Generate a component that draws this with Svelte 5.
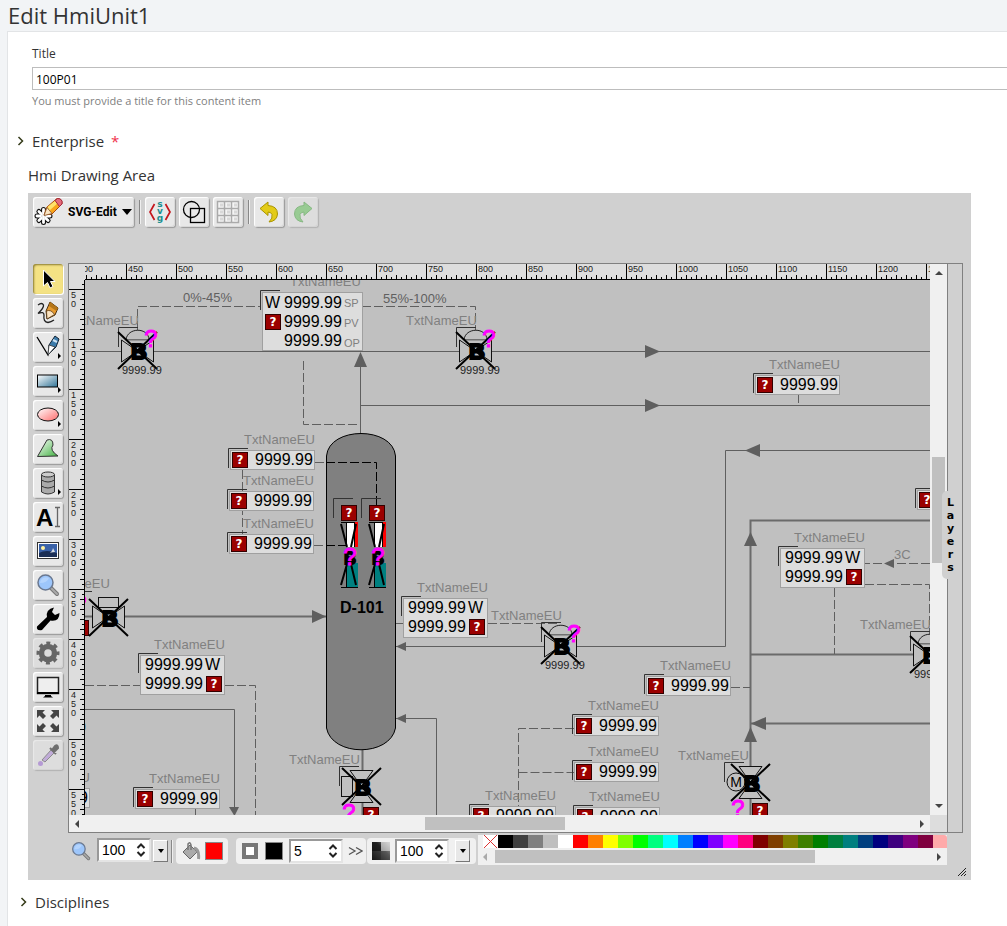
<script>
  const name = 'TxtNameEU';
  const reading = '9999.99';

  const hTicks = Array.from({ length: 60 }, (_, i) => ({ x: i * 50 - 9, label: String(400 + i * 50) }));
  const vTicks = Array.from({ length: 12 }, (_, i) => ({ y: i * 50 - 40, label: String(i * 50) }));
  const subs = [1, 2, 3, 4, 5, 6, 7, 8, 9];
  const petals = [0, 45, 90, 135, 180, 225, 270, 315];

  const singles = [
    [230, 450], [229, 491], [229, 534], [135, 789], [755, 375], [646, 676],
    [574, 716], [574, 762], [471, 806], [575, 807], [917, 490], [5, 788]
  ];
  const doubles = [[140, 655], [403, 598], [780, 548]];
  const valves = [[137, 351], [475, 351], [560, 646], [929, 655]];
  const gauges = [[341, 505], [369, 505]];

  const pipes = [
    'M85 351.5H930', 'M360.5 434V354', 'M360 405.5H930', 'M930 450.5H725.5V646.5H396',
    'M85 709.5H234.5V815', 'M396 718.5H436.5V815'
  ];
  const mains = [
    'M750.5 783V520.5H930', 'M750 654.5H930', 'M750 723.5H930', 'M85 616.5H326',
    'M362.5 750V815', 'M750.5 783V815'
  ];
  const signals = [
    'M137.5 330V306.5H260', 'M362 306.5H475.5V330', 'M303.5 361V424.5H360', 'M798.5 394V405',
    'M242.5 470V534', 'M315 462.5H326', 'M314 545.5H326', 'M85 685.5H140', 'M225 685.5H255.5V815',
    'M195.5 809V815', 'M574 728.5H518.5V806', 'M518.5 772.5H574', 'M396 623.5H403', 'M488 623.5H560',
    'M731 687.5H750', 'M930 563.5H865', 'M865 584.5H929.5V640', 'M834.5 588V654'
  ];
  const arrows = [
    '354,367 367,367 360.5,352', '645,345 645,358 660,351.5', '645,399 645,412 660,405.5',
    '760,444 760,457 745,450.5', '744,546 757,546 750.5,532', '766,717 766,730 751,723.5',
    '744,742 757,742 750.5,727', '312,610 312,623 326,616.5', '406,642 406,651 396,646.5',
    '406,714 406,723 396,718.5', '229,807 239,807 234.5,816', '894,559 894,568 884,563.5'
  ];
  const swatches = [
    '#000000', '#3f3f3f', '#7f7f7f', '#bfbfbf', '#ffffff', '#ff0000', '#ff7f00', '#ffff00', '#7fff00',
    '#00ff00', '#00ff7f', '#00ffff', '#007fff', '#0000ff', '#7f00ff', '#ff00ff', '#ff007f', '#7f0000',
    '#7f3f00', '#7f7f00', '#3f7f00', '#007f00', '#007f3f', '#007f7f', '#003f7f', '#00007f', '#3f007f',
    '#7f007f', '#7f003f', '#ffaaaa'
  ];

  const tools = [
    'Select', 'Pencil', 'Line', 'Rectangle', 'Ellipse', 'Path', 'Shape library', 'Text', 'Image',
    'Zoom', 'Wrench', 'Settings', 'Display', 'Full size', 'Eye dropper'
  ];
  const flyouts = ['Line', 'Rectangle', 'Ellipse', 'Shape library'];
  const faded = ['Settings', 'Eye dropper'];
  let active = $state('Select');
  let title = $state('100P01');
  let zoom = $state('100');
  let stroke = $state('5');
  let opacity = $state('100');
</script>

{#snippet query(x, y)}
  <rect x={x + 0.5} y={y + 0.5} width="15" height="15" fill="#9b0000" stroke="#300" />
  <text class="q" x={x + 8} y={y + 12}>?</text>
{/snippet}

{#snippet corner(x, y)}
  <path d="M{x + 0.5} {y + 20}V{y + 0.5}H{x + 20}" fill="none" stroke="#333" />
{/snippet}

{#snippet cross(x, y)}
  <text class="fail" x={x + 2} y={y + 8}>B</text>
  <path d="M{x - 19} {y - 19}L{x + 20} {y + 18}M{x + 20} {y - 19}L{x - 19} {y + 18}" stroke="#000" stroke-width="2" />
{/snippet}

{#snippet magnifier()}
  <path d="M15 15L21 21" stroke="#777" stroke-width="4" stroke-linecap="round" />
  <path d="M15 15L21 21" stroke="#aaa" stroke-width="2" stroke-linecap="round" />
  <circle cx="9.500" cy="9.500" r="7.500" fill="#9dc6fb" stroke="#6a7890" stroke-width="1.500" />
  <path d="M4 10A6 6 0 0 1 13 5Q11 10 4 10Z" fill="#b4d4fd" />
{/snippet}

{#snippet spinner()}
  <svg class="spin" width="10" height="16" viewBox="0 0 10 16" aria-hidden="true">
    <path d="M1.500 6L5 2.500L8.500 6M1.500 10L5 13.500L8.500 10" fill="none" stroke="#222" stroke-width="2" />
  </svg>
{/snippet}

<h1>Edit HmiUnit1</h1>

<main>
  <div class="field">
    <label for="title">Title</label>
    <input id="title" type="text" bind:value={title} />
    <p>You must provide a title for this content item</p>
  </div>

  <h2><button class="fold"><svg width="8" height="10" viewBox="0 0 8 10" aria-hidden="true"><path d="M1.500 1L5.500 5L1.500 9" /></svg>Enterprise <em>*</em></button></h2>

  <h2 class="area">Hmi Drawing Area</h2>

  <section class="editor" aria-label="SVG-Edit">
    <div class="topbar">
      <button class="btn menu">
        <svg width="31" height="30" viewBox="0 0 31 30" aria-hidden="true">
          <g transform="translate(10.500 19)" stroke-linecap="round">
            {#each petals as a}<path transform="rotate({a})" d="M0 0V-6.500" stroke="#111" stroke-width="5" />{/each}
            {#each petals as a}<path transform="rotate({a})" d="M0 -3V-6.500" stroke="#fff" stroke-width="2.800" />{/each}
            {#each petals as a}<path transform="rotate({a})" d="M0 0V-4" stroke="#fff" stroke-width="1.200" />{/each}
          </g>
          <path d="M11 18L14 10L24 1.500Q29.500 1.500 29 7L19 17Z" fill="#f9a51b" stroke="#a8480f" />
          <path d="M14.500 10L23 3L25.500 5.500L16.500 13.500Z" fill="#ffe36b" />
          <path d="M22 3.500L24.500 1.500Q30 1.500 29 7L26.500 9.500Z" fill="#e66c7b" stroke="#a5283c" />
          <path d="M11 18.500L14 10.500L19 16.500Z" fill="#fbe5c3" stroke="#7b4a20" stroke-width=".7" />
        </svg>
        <span>SVG-Edit</span>
        <svg width="10" height="6" viewBox="0 0 10 6" aria-hidden="true"><path d="M0 0H10L5 6Z" /></svg>
      </button>
      <i class="rule"></i>
      <button class="btn" aria-label="Edit source">
        <svg width="24" height="24" viewBox="0 0 24 24" aria-hidden="true">
          <path d="M6.500 4L2 12L6.500 20M17.500 4L22 12L17.500 20" fill="none" stroke="#c4161c" stroke-width="1.700" />
          <g class="svgmark"><text x="12" y="7">s</text><text x="12" y="14">v</text><text x="12" y="21">g</text></g>
        </svg>
      </button>
      <button class="btn" aria-label="Wireframe mode">
        <svg width="24" height="24" viewBox="0 0 24 24" fill="none" stroke="#000" stroke-width="1.300" aria-hidden="true"><circle cx="9.500" cy="9.500" r="8" /><rect x="8.500" y="8.500" width="14" height="14" /></svg>
      </button>
      <button class="btn" aria-label="Show grid">
        <svg width="24" height="24" viewBox="0 0 24 24" aria-hidden="true">
          <path d="M1.500 1.500H22.500V22.500H1.500Z" fill="#f4f4f4" />
          <path d="M4 5H7M11 5H14M18 5H21M4 12H7M11 12H14M18 12H21M4 19H7M11 19H14M18 19H21" stroke="#d8d8d8" stroke-width="3" />
          <path d="M1.500 1.500H22.500V22.500H1.500ZM8.500 1V23M15.500 1V23M1 8.500H23M1 15.500H23" fill="none" stroke="#aaa" stroke-width="1.500" />
        </svg>
      </button>
      <i class="rule"></i>
      <button class="btn" aria-label="Undo">
        <svg width="24" height="24" viewBox="0 0 24 24" aria-hidden="true"><path d="M3 8.500L11 2V5.500Q20.500 6 20.500 14Q20 21 12 22Q16 18 15 14.500Q14 12 11 12V15.500Z" fill="#e3cb17" stroke="#a99400" /></svg>
      </button>
      <button class="btn faded" aria-label="Redo">
        <svg width="24" height="24" viewBox="0 0 24 24" aria-hidden="true"><path d="M21 8.500L13 2V5.500Q3.500 6 3.500 14Q4 21 12 22Q8 18 9 14.500Q10 12 13 12V15.500Z" fill="#6cc862" stroke="#4ba544" /></svg>
      </button>
    </div>

    <div class="middle">
      <div class="tools" role="toolbar" aria-label="Drawing tools">
        {#each tools as tool}
          <button class="btn" class:active={active === tool} class:faded={faded.includes(tool)} aria-label={tool} onclick={() => (active = tool)}>
            <svg width="24" height="24" viewBox="0 0 24 24" aria-hidden="true">
              {#if tool === 'Select'}
                <path d="M7.500 3V19L11.500 15.500L14 21L17 19.500L14.500 14.500H19Z" stroke="#fff" />
              {:else if tool === 'Pencil'}
                <path d="M2 4Q6 1 7.500 4Q8 7 2 12.500Q8 10 8 14Q7 21 12 21.500Q15 21 18 19" fill="none" stroke="#222" stroke-width="1.300" />
                <path d="M10 10L14 1L22 7L19 14L11 18Z" fill="#e79a2e" stroke="#4a2d0c" /><path d="M10.500 10Q15 8 18.500 13.500L11 18Z" fill="#fbe3c0" stroke="#4a2d0c" stroke-width=".7" /><path d="M14 1L22 7L20.500 10L13 5Z" fill="#b57618" />
              {:else if tool === 'Line'}
                <path d="M1 2L12 20L15 11" fill="none" stroke="#000" stroke-width="1.300" />
                <path d="M12 20L13 10L19 1L23 4L20 12Z" fill="#3c7cac" stroke="#123" /><path d="M12 20L13 10L19 12Z" fill="#fff" stroke="#333" stroke-width=".8" /><path d="M17 5L21 7" stroke="#cfe4f5" stroke-width="2" />
              {:else if tool === 'Rectangle'}
                <rect x="1.500" y="6" width="20" height="12" fill="url(#blue)" stroke="#000" />
              {:else if tool === 'Ellipse'}
                <ellipse cx="12" cy="11.500" rx="10.500" ry="6.500" fill="url(#pink)" stroke="#111" />
              {:else if tool === 'Path'}
                <path d="M1.500 19.500L11 3Q17 1 17 8Q13 13 22 19Z" fill="url(#green)" stroke="#333" />
              {:else if tool === 'Shape library'}
                <g fill="#aaa" stroke="#333"><path d="M5.500 3.500V21Q12 25 18.500 21V3.500" /><ellipse cx="12" cy="3.500" rx="6.500" ry="2.500" fill="#ccc" /><path d="M5.500 9Q12 13 18.500 9M5.500 15Q12 19 18.500 15" fill="none" /></g>
              {:else if tool === 'Text'}
                <text class="glyph" x="0" y="21">A</text><path d="M19 2.500H24M19 21.500H24M21.500 2.500V21.500" fill="none" stroke="#666" stroke-width="1.300" />
              {:else if tool === 'Image'}
                <rect x="1.500" y="3.500" width="21" height="16" fill="#fff" stroke="#333" /><rect x="3" y="5" width="18" height="13" fill="#3a62a8" /><path d="M3 14Q10 10 21 14V18H3Z" fill="#1c2f55" /><circle cx="7" cy="9" r="2" fill="#fff1a0" /><path d="M12 14Q16 14 17 9L19 13Z" fill="#d9dde5" />
              {:else if tool === 'Zoom'}
                {@render magnifier()}
              {:else if tool === 'Wrench'}
                <path d="M1 19.500L11 10Q9.500 2.500 18 0.500L16 5L19 8L23.500 6Q23.500 15 14.500 13.500L6 23Q0 24 1 19.500Z" />
              {:else if tool === 'Settings'}
                <circle cx="12" cy="12" r="6.500" fill="none" stroke="#111" stroke-width="5.500" /><circle cx="12" cy="12" r="10" fill="none" stroke="#111" stroke-width="3" stroke-dasharray="4 3.850" stroke-dashoffset="2" />
              {:else if tool === 'Display'}
                <rect x="1.500" y="2.500" width="21" height="16" fill="#eee" stroke="#222" stroke-width="1.500" /><path d="M1 17H23V19H1Z" /><path d="M9 20H15V21L17 22.500H7L9 21Z" />
              {:else if tool === 'Full size'}
                <path d="M1 1H9L6.500 3.500L10 7L7 10L3.500 6.500L1 9ZM23 1V9L20.500 6.500L17 10L14 7L17.500 3.500L15 1ZM1 23V15L3.500 17.500L7 14L10 17L6.500 20.500L9 23ZM23 23H15L17.500 20.500L14 17L17 14L20.500 17.500L23 15Z" fill="#444" />
              {:else}
                <path d="M6 17L15 7L18 10L9 19Z" fill="#b38ee0" stroke="#555" /><path d="M14 5L20 11M16 7L19 3Q22 1 22 5L18 9Z" fill="#222" stroke="#222" stroke-width="2" /><circle cx="4.500" cy="20.500" r="2.500" fill="#a06fd8" />
              {/if}
            </svg>
            {#if flyouts.includes(tool)}<b class="fly"></b>{/if}
          </button>
        {/each}
      </div>

      <div class="work">
        <div class="origin"></div>
        <svg class="ruler" width="100%" height="16" aria-hidden="true">
          <path d="M0 15.500H3000" stroke="#000" />
          {#each hTicks as t}
            <path d="M{t.x + 0.5} 0V16" stroke="#000" />
            {#each subs as s}<path d="M{t.x + s * 5 + 0.5} {s % 2 ? 13 : 11}V16" stroke="#000" />{/each}
            <text x={t.x + 2} y="8">{t.label}</text>
          {/each}
        </svg>
        <div class="vscroll"><b class="up"></b><span></span><b class="down"></b></div>
        <div class="side"></div>
        <svg class="ruler left" width="16" height="535" aria-hidden="true">
          <path d="M15.500 0V535" stroke="#000" />
          {#each vTicks as t}
            <path d="M0 {t.y - 0.5}H16" stroke="#000" />
            {#each subs as s}<path d="M{s % 2 ? 13 : 11} {t.y + s * 5 - 0.5}H16" stroke="#000" />{/each}
            {#each t.label as d, i}<text x="2" y={t.y + 8 + i * 9}>{d}</text>{/each}
          {/each}
        </svg>

        <svg class="canvas" width="100%" height="535" role="img" aria-label="Process drawing">
          <defs>
            <linearGradient id="blue" x2="1" y2="1"><stop stop-color="#fff" /><stop offset="1" stop-color="#2f7396" /></linearGradient>
            <linearGradient id="pink" x2="1" y2="1"><stop stop-color="#fff" /><stop offset="1" stop-color="#ff6a6a" /></linearGradient>
            <linearGradient id="green" x2="1" y2="1"><stop stop-color="#fff" /><stop offset="1" stop-color="#3eb03e" /></linearGradient>
          </defs>
          <g transform="translate(-85 -280)">
            {#each pipes as d}<path {d} fill="none" stroke="#5f5f5f" />{/each}
            {#each mains as d}<path {d} fill="none" stroke="#6b6b6b" stroke-width="2" />{/each}
            {#each signals as d}<path {d} fill="none" stroke="#5f5f5f" stroke-dasharray="9 3" />{/each}
            {#each arrows as points}<polygon {points} fill="#5f5f5f" />{/each}

            <path d="M326.500 456C329 426 393 426 395.500 456V728C390 757 332 757 326.500 728Z" fill="#808080" stroke="#000" />
            <path d="M326 462.500H376.500V505M326 545.500H346" fill="none" stroke="#000" stroke-dasharray="9 3" />
            <text class="tag" x="340" y="613">D-101</text>

            {#each gauges as [x, y]}
              {@render corner(x - 8, y - 7)}
              {@render query(x, y)}
              <rect x={x + 5} y={y + 17} width="8" height="25" fill="#fff" />
              <rect x={x + 14} y={y + 17} width="3" height="25" fill="#f00" />
              <rect x={x + 6} y={y + 58} width="11" height="24" fill="#008080" />
              <path d="M{x} {y + 17.5}H{x + 13}M{x} {y + 82.5}H{x + 17}M{x + 5.5} {y + 17}V{y + 42}M{x + 5.5} {y + 58}V{y + 82}M{x + 13.5} {y + 17}V{y + 42}" stroke="#000" />
              <path d="M{x} {y + 19}L{x + 6} {y + 42}M{x + 15} {y + 19}L{x + 10} {y + 42}M{x + 6} {y + 59}L{x} {y + 80}M{x + 10} {y + 59}L{x + 15} {y + 80}" stroke="#000" stroke-width="2" />
              <text class="fail small" x={x + 9} y={y + 59}>B</text>
              <text class="ask" x={x + 9} y={y + 60}>?</text>
            {/each}

            <text class="pct" x="183" y="302">0%-45%</text>
            <text class="pct" x="383" y="303">55%-100%</text>
            <text class="name" x="894" y="559">3C</text>
            <text class="val" x="28" y="733">{reading}</text>

            {#each singles as [x, y]}
              {@render corner(x - 2, y - 2)}
              <rect x={x + 0.5} y={y + 0.5} width="84" height="19" fill="#ddd" stroke="#a0a0a0" />
              {@render query(x + 2, y + 2)}
              <text class="val" x={x + 25} y={y + 15}>{reading}</text>
              <text class="name" x={x + 14} y={y - 6}>{name}</text>
            {/each}

            {#each doubles as [x, y]}
              {@render corner(x - 2, y - 2)}
              <rect x={x + 0.5} y={y + 0.5} width="84" height="39" fill="#ddd" stroke="#a0a0a0" />
              <text class="val" x={x + 5} y={y + 15}>{reading}</text>
              <text class="val" x={x + 65} y={y + 15}>W</text>
              <text class="val" x={x + 5} y={y + 34}>{reading}</text>
              {@render query(x + 66, y + 21)}
              <text class="name" x={x + 14} y={y - 6}>{name}</text>
            {/each}

            {@render corner(260, 290)}
            <rect x="262.500" y="292.500" width="100" height="58" fill="#ddd" stroke="#a0a0a0" />
            <text class="name" x="290" y="286">{name}</text>
            <text class="val" x="265" y="308">W</text>
            {@render query(265, 314)}
            {#each ['SP', 'PV', 'OP'] as unit, i}
              <text class="val" x="284" y={308 + i * 19}>{reading}</text>
              <text class="unit" x="344" y={307 + i * 20}>{unit}</text>
            {/each}

            {#each valves as [x, y]}
              {@render corner(x - 19, y - 24)}
              <path d="M{x - 11} {y - 11}C{x - 10} {y - 24} {x + 12} {y - 24} {x + 12} {y - 11}Z" fill="#c0c0c0" stroke="#222" />
              <rect x={x - 15.5} y={y - 10.5} width="32" height="21" fill="#c0c0c0" />
              <path d="M{x - 15.5} {y - 11}V{y + 11}L{x + 16.5} {y - 11}V{y + 11}Z" fill="none" stroke="#111" />
              {@render cross(x, y)}
              <text class="ask" x={x + 14} y={y - 4}>?</text>
              <text class="mini" x={x - 15} y={y + 23}>{reading}</text>
              <text class="name" x={x - 69} y={y - 26}>{name}</text>
            {/each}

            {@render corner(72, 591)}
            {@render query(73, 620)}
            <text class="ask" x="80" y="612">?</text>
            <rect x="98.500" y="597.500" width="20" height="10" fill="#c0c0c0" stroke="#111" />
            <path d="M92.500 606V628L124.500 606V628Z" fill="#c0c0c0" stroke="#111" />
            {@render cross(108, 618)}
            <text class="name" x="39" y="588">{name}</text>

            {@render corner(339, 766)}
            <rect x="341.500" y="776.500" width="11" height="20" fill="#c0c0c0" stroke="#111" />
            <path d="M350 770.500H373L350 802.500H373Z" fill="#c0c0c0" stroke="#111" />
            {@render cross(361, 787)}
            <text class="ask" x="349" y="821">?</text>
            {@render query(363, 807)}
            <text class="name" x="289" y="764">{name}</text>

            {@render corner(724, 762)}
            <circle cx="736" cy="782" r="9" fill="none" stroke="#111" />
            <text class="motor" x="736" y="787">M</text>
            <path d="M739 766.500H762L739 798.500H762Z" fill="#c0c0c0" stroke="#111" />
            {@render cross(750, 783)}
            <text class="ask" x="738" y="817">?</text>
            {@render query(752, 803)}
            <text class="name" x="678" y="760">{name}</text>
          </g>
        </svg>
        <div class="hscroll"><b class="prev"></b><span></span><b class="next"></b></div>
        <div class="end"></div>
        <button class="layers">Layers</button>
      </div>
    </div>

    <div class="bottom">
      <label class="lens" for="zoom" aria-label="Zoom level"><svg width="20" height="20" viewBox="0 0 24 24" aria-hidden="true">{@render magnifier()}</svg></label>
      <span class="num"><input id="zoom" bind:value={zoom} />{@render spinner()}</span>
      <button class="drop" aria-label="Zoom presets"><b class="down"></b></button>
      <i class="rule"></i>
      <div class="group fill">
        <svg width="20" height="20" viewBox="0 0 20 20" aria-hidden="true"><path d="M2 11L9 4L16 11L9 18Z" fill="#aaa" stroke="#666" /><path d="M7 9V3Q9 0 10 4V9" fill="none" stroke="#777" stroke-width="1.500" /><path d="M13 7Q18.500 8 17.500 18" fill="none" stroke="#999" stroke-width="3" /></svg>
        <button class="paint red" aria-label="Fill colour"></button>
      </div>
      <div class="group stroke">
        <i class="outline"></i>
        <button class="paint black" aria-label="Stroke colour"></button>
        <span class="num"><input aria-label="Stroke width" bind:value={stroke} />{@render spinner()}</span>
        <button class="more" aria-label="More stroke options"><svg width="15" height="10" viewBox="0 0 15 10" aria-hidden="true"><path d="M1 1.500L7 5L1 8.500M8 1.500L14 5L8 8.500" fill="none" stroke="#555" stroke-width="1.300" /></svg></button>
      </div>
      <div class="group alpha">
        <i class="checker"></i>
        <span class="num"><input aria-label="Opacity" bind:value={opacity} />{@render spinner()}</span>
        <button class="drop" aria-label="Opacity presets"><b class="down"></b></button>
      </div>
      <div class="palette">
        <div class="colors">
          <button aria-label="No colour"><svg width="15" height="13" viewBox="0 0 15 13" aria-hidden="true"><path d="M0 0H15V13H0Z" fill="#fff" /><path d="M1 0L14 13M14 0L1 13" stroke="#d33" /></svg></button>
          {#each swatches as c}<button aria-label={c} style="background: {c}"></button>{/each}
        </div>
        <div class="pscroll"><b class="prev dim"></b><span></span><b class="next"></b></div>
      </div>
    </div>
    <svg class="grip" width="9" height="8" viewBox="0 0 9 8" aria-hidden="true"><path d="M0 8L8 0M3 8L8 3M6 8L8 6" stroke="#222" /></svg>
  </section>

  <h2 class="last"><button class="fold"><svg width="8" height="10" viewBox="0 0 8 10" aria-hidden="true"><path d="M1.500 1L5.500 5L1.500 9" /></svg>Disciplines</button></h2>
</main>

<style>
  :global(body) { background: #f2f4f6; overflow: hidden; font-family: "Open Sans", "Noto Sans", sans-serif; color: #333; }
  button { font: inherit; color: inherit; padding: 0; border: 0; background: none; }
  svg { display: block; flex: none; }
  h1 { margin: 0 0 0 8px; font-size: 22px; line-height: 31px; font-weight: 400; }
  main { box-sizing: border-box; margin-left: 7px; border: 1px solid #e2e4e6; border-right: 0; background: #fff; padding-bottom: 40px; }
  .field { margin-left: 24px; padding-top: 14px; font-size: 12px; }
  .field label { display: block; line-height: 16px; margin-bottom: 5px; }
  .field input { box-sizing: border-box; display: block; width: 100%; height: 23px; padding: 1px 3px 0; border: 1px solid #bdbdbd; border-right: 0; font: inherit; color: #000; }
  .field p { margin: 3px 0 0; line-height: 16px; font-size: 11px; color: #808080; }
  h2 { margin: 22px 0 0; font-size: 15px; line-height: 20px; font-weight: 400; }
  h2.area { margin: 14px 0 0 20px; }
  h2.last { margin: 12px 0 0 3px; }
  .fold { display: flex; align-items: center; margin-left: 9px; gap: 7px; }
  .fold path { fill: none; stroke: #343a18; stroke-width: 1.5; }
  .fold em { color: #f0304a; font-style: normal; }

  .editor { position: relative; margin: 8px 36px 0 20px; padding: 4px 8px 15px 5px; background: #d0d0d0; }
  .topbar { display: flex; gap: 4px; height: 30px; }
  .btn { position: relative; box-sizing: border-box; display: flex; align-items: center; justify-content: center; width: 30px; height: 30px; border-radius: 3px; background: #e8e8e8; box-shadow: inset 1px 1px 1px #fff, inset -1px -1px 0 #d8d8d8, 1px 1px 1px #999; }
  .btn.active { background: #f4e284; box-shadow: inset 1px 1px 2px #8a7a30, 1px 1px 0 #fff; }
  .faded { opacity: .55; }
  .menu { width: 101px; gap: 4px; justify-content: flex-start; font: 700 12px Roboto, "Open Sans", sans-serif; color: #000; }
  .menu span { margin-right: 1px; }
  .rule { width: 1px; margin: 3px; border-left: 1px solid #888; background: #eee; }
  .topbar .rule { margin: 3px 0 3px 1px; }
  .svgmark { font: 700 9px "DejaVu Sans", sans-serif; fill: #1a9090; text-anchor: middle; }
  .glyph { font: 700 24px "Liberation Sans", sans-serif; }

  .middle { display: flex; gap: 5px; margin-top: 36px; }
  .tools { display: flex; flex-direction: column; gap: 4px; padding-top: 1px; }
  .fly { position: absolute; right: 2px; bottom: 3px; border: 3px solid transparent; border-left-color: #000; border-right: 0; }
  .work { position: relative; flex: 1; min-width: 0; display: grid; grid-template: 16px auto 17px / 16px 1fr 17px 15px; border: 1px solid #808080; }
  .origin, .ruler { background: #ddd; }
  .ruler { overflow: hidden; font: 9px "Liberation Sans", sans-serif; fill: #222; }
  .vscroll { grid-column: 3; grid-row: 1 / 3; display: flex; flex-direction: column; align-items: center; background: #f0f0f0; padding: 7px 2px; }
  .vscroll span { width: 13px; height: 106px; margin: 182px 0 auto; background: #c0c0c0; }
  .side { grid-column: 4; grid-row: 1 / 4; border-left: 1px solid #808080; background: #d0d0d0; }
  .left { grid-column: 1; grid-row: 2; }
  .canvas { grid-column: 2; grid-row: 2; background: #c0c0c0; overflow: hidden; font-family: "Liberation Sans", sans-serif; }
  .hscroll { grid-column: 1 / 3; grid-row: 3; display: flex; align-items: center; background: #f0f0f0; padding: 0 6px; }
  .hscroll span { width: 140px; height: 13px; margin: 0 auto 0 346px; background: #c0c0c0; }
  .end { grid-column: 3; grid-row: 3; background: #ddd; }
  b { width: 0; height: 0; }
  .up, .down { border: 4px solid transparent; }
  .up { border-top: 0; border-bottom-color: #444; }
  .down { border-bottom: 0; border-top-color: #444; }
  .prev, .next { border: 4px solid transparent; }
  .prev { border-left: 0; border-right-color: #444; }
  .next { border-right: 0; border-left-color: #444; }
  .dim { border-right-color: #aaa; }
  .layers { position: absolute; right: 4px; top: 227px; box-sizing: border-box; width: 16px; height: 88px; padding: 5px 0 0 1px; border-radius: 5px 0 0 5px; background: #d0d0d0; color: #000; font: 700 11px/13px "DejaVu Sans", sans-serif; writing-mode: vertical-lr; text-orientation: upright; display: flex; align-items: center; }

  .q { font: 700 12px "DejaVu Sans", sans-serif; fill: #fff; text-anchor: middle; }
  .name, .pct { font-size: 13px; fill: #808080; }
  .pct { fill: #606060; }
  .val { font-size: 16px; fill: #000; }
  .unit { font-size: 11px; fill: #808080; }
  .mini { font-size: 11px; fill: #222; }
  .motor { font-size: 14px; text-anchor: middle; }
  .tag { font-size: 16px; font-weight: 700; }
  .fail { font-size: 22px; font-weight: 700; stroke: #000; stroke-width: 2; text-anchor: middle; }
  .small { font-size: 16px; }
  .ask { font-size: 24px; fill: #f0f; stroke: #f0f; stroke-width: 1; text-anchor: middle; }

  .bottom { display: flex; align-items: flex-start; margin: 2px 16px 0 38px; height: 30px; }
  .lens { margin-top: 6px; }
  .num { position: relative; box-sizing: border-box; display: flex; align-items: center; width: 54px; height: 24px; border: 2px solid #999; border-right-color: #e4e4e4; border-bottom-color: #e4e4e4; background: #fff; }
  .num input { box-sizing: border-box; flex: 1; min-width: 0; padding: 0 0 0 3px; border: 0; background: none; font: 14px "Liberation Sans", sans-serif; color: #000; }
  .spin { margin-right: 3px; }
  .bottom > .num { margin: 3px 0 0 6px; }
  .drop { box-sizing: border-box; display: flex; align-items: center; justify-content: center; width: 15px; height: 22px; border: 1px solid #fff; border-right-color: #777; border-bottom-color: #777; background: #e8e8e8; }
  .bottom > .drop { margin: 5px 0 0 2px; }
  .drop .down { border-top-color: #000; border-width: 4px 3px 0; }
  .bottom > .rule { margin: 5px 3px 0 3px; height: 23px; }
  .group { box-sizing: border-box; display: flex; align-items: center; height: 26px; margin-top: 3px; border-radius: 4px; background: #f0f0f0; }
  .fill { width: 52px; padding-left: 5px; gap: 4px; }
  .paint { box-sizing: border-box; width: 18px; height: 18px; border: 1px solid #888; }
  .red { background: #f00; }
  .black { background: #000; }
  .stroke { width: 130px; margin-left: 8px; padding-left: 6px; }
  .outline { box-sizing: border-box; width: 16px; height: 16px; margin-right: 7px; border: 4px solid #777; background: #fff; }
  .stroke .num { margin-left: 6px; }
  .more { margin-left: 5px; }
  .alpha { width: 109px; margin-left: 1px; padding-left: 5px; }
  .checker { width: 18px; height: 18px; margin-right: 5px; background: linear-gradient(225deg, #fff8, #0000 40%, #000a), conic-gradient(#aaa 25%, #555 0 50%, #444 0 75%, #222 0); }
  .alpha .drop { margin-left: 6px; }
  .palette { flex: 1; min-width: 0; margin-left: 2px; padding-left: 5px; background: #f0f0f0; }
  .colors { display: flex; height: 13px; overflow: hidden; border-radius: 0 3px 0 0; }
  .colors button { flex: 0 0 15px; height: 13px; }
  .pscroll { display: flex; align-items: center; height: 17px; padding-right: 6px; }
  .pscroll .prev { margin: 0 8px 0 0; }
  .pscroll span { width: 320px; height: 13px; margin-right: auto; background: #c0c0c0; }
  .grip { position: absolute; right: 4px; bottom: 4px; }
</style>
